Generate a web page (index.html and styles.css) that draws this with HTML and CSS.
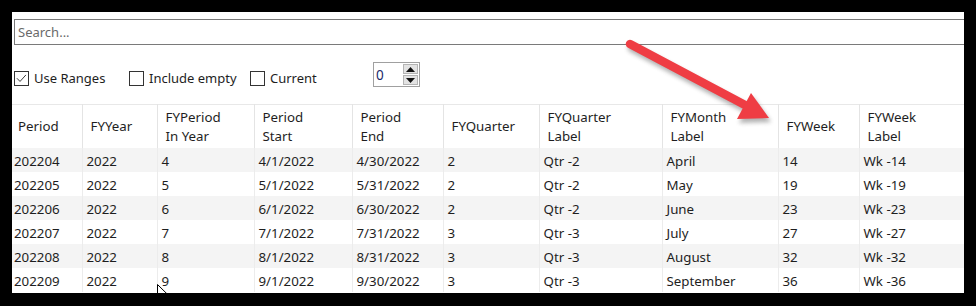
FILE: index.html
```html
<!DOCTYPE html>
<html>
<head>
<meta charset="utf-8">
<link rel="stylesheet" href="styles.css">
</head>
<body>
<div class="window">
  <div class="search">Search...</div>
  <div class="options">
    <label class="check w1"><span class="box"><svg viewBox="0 0 15 15" width="13" height="13"><path d="M2.2 7.2 L5.8 10.9 L12.6 3.4" fill="none" stroke="#333" stroke-width="1.1"/></svg></span>Use Ranges</label>
    <label class="check w2"><span class="box"></span>Include empty</label>
    <label class="check w3"><span class="box"></span>Current</label>
    <div class="spin">
      <span class="spin-val">0</span>
      <div class="spin-btns">
        <span class="spin-btn"><svg width="9" height="5" viewBox="0 0 9 5"><path d="M0 5 L4.5 0 L9 5 Z" fill="#111"/></svg></span>
        <span class="spin-btn"><svg width="9" height="5" viewBox="0 0 9 5"><path d="M0 0 L4.5 5 L9 0 Z" fill="#111"/></svg></span>
      </div>
    </div>
  </div>
  <table class="grid">
    <colgroup>
      <col style="width:70px"><col style="width:75px"><col style="width:97px"><col style="width:98px"><col style="width:91px"><col style="width:96px"><col style="width:123px"><col style="width:116px"><col style="width:81px"><col style="width:110px">
    </colgroup>
    <thead>
      <tr>
        <th>Period</th><th>FYYear</th><th>FYPeriod<br>In Year</th><th>Period<br>Start</th><th>Period<br>End</th><th>FYQuarter</th><th>FYQuarter<br>Label</th><th>FYMonth<br>Label</th><th>FYWeek</th><th>FYWeek<br>Label</th>
      </tr>
    </thead>
    <tbody>
      <tr><td>202204</td><td>2022</td><td>4</td><td>4/1/2022</td><td>4/30/2022</td><td>2</td><td>Qtr -2</td><td>April</td><td>14</td><td>Wk -14</td></tr>
      <tr><td>202205</td><td>2022</td><td>5</td><td>5/1/2022</td><td>5/31/2022</td><td>2</td><td>Qtr -2</td><td>May</td><td>19</td><td>Wk -19</td></tr>
      <tr><td>202206</td><td>2022</td><td>6</td><td>6/1/2022</td><td>6/30/2022</td><td>2</td><td>Qtr -2</td><td>June</td><td>23</td><td>Wk -23</td></tr>
      <tr><td>202207</td><td>2022</td><td>7</td><td>7/1/2022</td><td>7/31/2022</td><td>3</td><td>Qtr -3</td><td>July</td><td>27</td><td>Wk -27</td></tr>
      <tr><td>202208</td><td>2022</td><td>8</td><td>8/1/2022</td><td>8/31/2022</td><td>3</td><td>Qtr -3</td><td>August</td><td>32</td><td>Wk -32</td></tr>
      <tr><td>202209</td><td>2022</td><td>9</td><td>9/1/2022</td><td>9/30/2022</td><td>3</td><td>Qtr -3</td><td>September</td><td>36</td><td>Wk -36</td></tr>
    </tbody>
  </table>
  <svg class="overlay" width="952" height="281" viewBox="0 0 952 281">
    <defs>
      <filter id="blur" x="-10%" y="-10%" width="120%" height="120%"><feGaussianBlur stdDeviation="2"/></filter>
    </defs>
    <g transform="translate(2,4)" opacity="0.45" filter="url(#blur)">
      <line x1="618" y1="32" x2="733" y2="93" stroke="#555" stroke-width="8.5" stroke-linecap="round"/>
      <polygon points="725,107 739,81 757,106" fill="#555"/>
    </g>
    <line x1="618" y1="32" x2="733" y2="93" stroke="#ef3d44" stroke-width="8.5" stroke-linecap="round"/>
    <polygon points="725,107 739,81 757,106" fill="#ef3d44"/>
    <path d="M145.5 272.5 L145.5 289 L149.5 285.2 L152.5 292 L155 291 L152 284.3 L157.5 284.3 Z" fill="#fff" stroke="#000" stroke-width="1"/>
  </svg>
</div>
</body>
</html>
```
FILE: styles.css
```css
html, body {
  margin: 0;
  padding: 0;
}
body {
  background: #000;
  width: 976px;
  height: 306px;
  overflow: hidden;
  font-family: "Noto Sans", "Open Sans", sans-serif;
  font-size: 13px;
  color: #1e1e1e;
}
.window {
  position: relative;
  margin: 12px 0 0 12px;
  width: 952px;
  height: 281px;
  background: #fff;
  overflow: hidden;
}
.search {
  box-sizing: border-box;
  margin: 7px 0 0 2px;
  width: 980px;
  height: 26px;
  border: 1px solid #7a7a7a;
  padding-left: 3px;
  display: flex;
  align-items: center;
  color: #6a6a6a;
}
.options {
  display: flex;
  align-items: flex-end;
  margin: 17px 0 0 2px;
  height: 25px;
}
.check {
  display: flex;
  align-items: center;
  gap: 5px;
  height: 16px;
  margin-bottom: 1px;
  color: #1e1e1e;
}
.w1 { width: 115px; }
.w2 { width: 121px; }
.w3 { width: 123px; }
.box {
  box-sizing: border-box;
  width: 15px;
  height: 15px;
  border: 1px solid #333;
  display: flex;
  align-items: center;
  justify-content: center;
  background: #fff;
}
.spin {
  box-sizing: border-box;
  width: 47px;
  height: 25px;
  border: 1px solid #a0a0a0;
  display: flex;
  align-items: center;
  justify-content: space-between;
  padding: 1px 1px 1px 2px;
}
.spin-val {
  color: #1a2a6a;
  font-size: 13.5px;
}
.spin-btns {
  display: flex;
  flex-direction: column;
  gap: 1px;
  height: 100%;
}
.spin-btn {
  box-sizing: border-box;
  width: 15px;
  flex: 1;
  background: #e3e3e3;
  border: 1px solid #b4b4b4;
  display: flex;
  align-items: center;
  justify-content: center;
}
.grid {
  margin-top: 17px;
  border-collapse: collapse;
  table-layout: fixed;
  width: 957px;
  border-top: 1px solid #e8e8e8;
  font-size: 13.3px;
}
.grid th {
  height: 43px;
  padding: 0 0 0 8px;
  text-align: left;
  vertical-align: middle;
  font-weight: normal;
  line-height: 19px;
  border-right: 1px solid #e4e4e4;
  white-space: nowrap;
  color: #1e1e1e;
}
.grid th:first-child {
  padding-left: 6px;
}
.grid td {
  height: 22px;
  padding: 2px 0 0 4px;
  border-right: 1px solid #ececec;
  white-space: nowrap;
  line-height: 22px;
}
.grid td:first-child {
  padding-left: 2px;
}
.grid tbody tr:nth-child(odd) td {
  background: #f4f4f4;
}
.overlay {
  position: absolute;
  left: 0;
  top: 0;
  pointer-events: none;
}
```
